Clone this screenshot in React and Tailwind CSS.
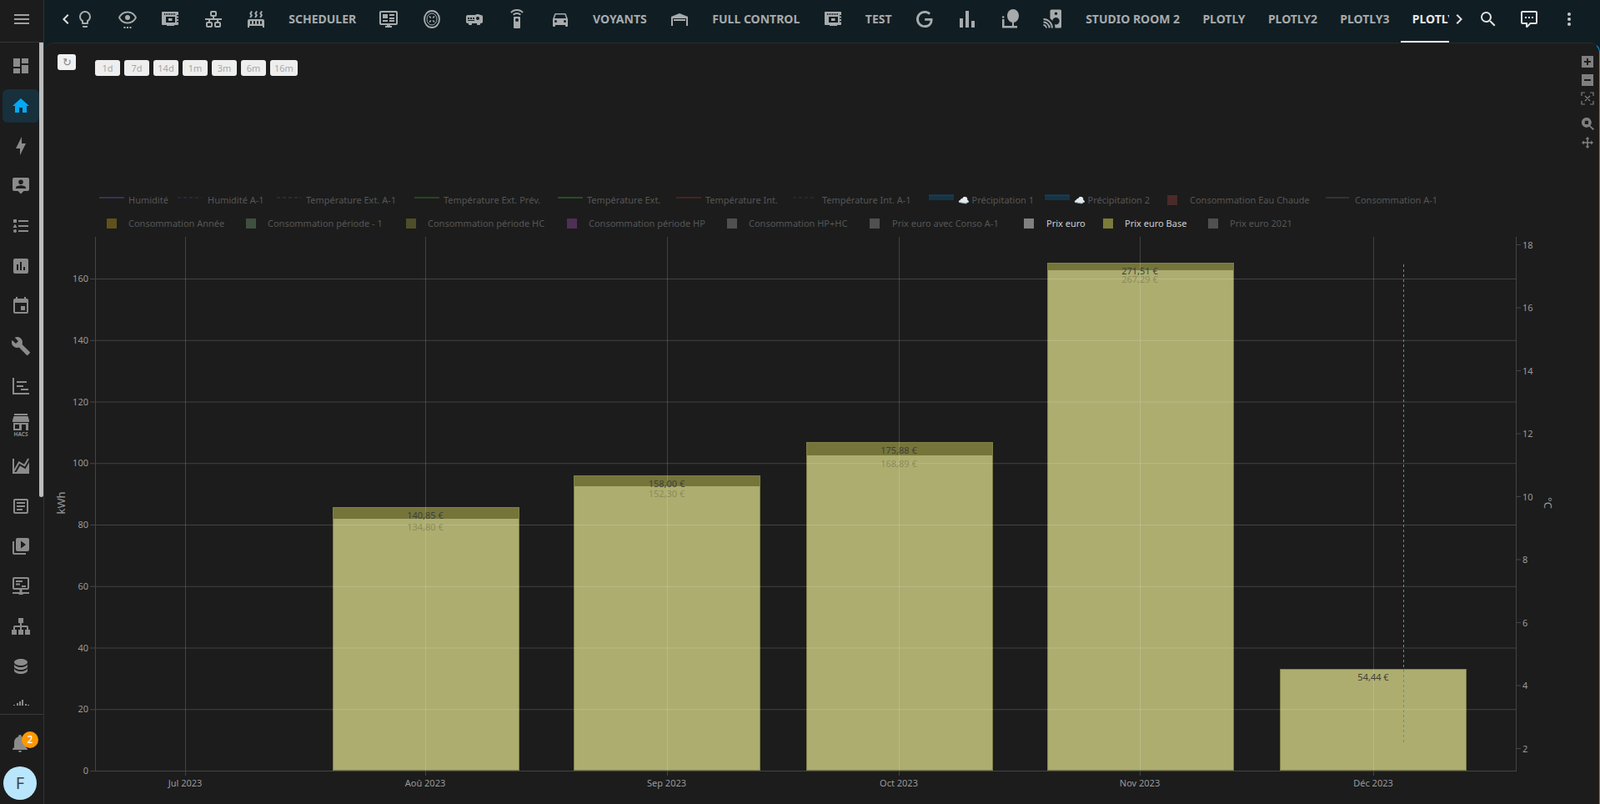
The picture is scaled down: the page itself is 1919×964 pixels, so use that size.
import React from 'react';

const P = {
  menu: 'M3,6H21V8H3V6M3,11H21V13H3V11M3,16H21V18H3V16Z',
  left: 'M15.41,16.58L10.83,12L15.41,7.41L14,6L8,12L14,18L15.41,16.58Z',
  right: 'M8.59,16.58L13.17,12L8.59,7.41L10,6L16,12L10,18L8.59,16.58Z',
  bulb: 'M12,2A7,7 0 0,1 19,9C19,11.38 17.81,13.47 16,14.74V17A1,1 0 0,1 15,18H9A1,1 0 0,1 8,17V14.74C6.19,13.47 5,11.38 5,9A7,7 0 0,1 12,2M9,21V20H15V21A1,1 0 0,1 14,22H10A1,1 0 0,1 9,21M12,4A5,5 0 0,0 7,9C7,11.05 8.23,12.81 10,13.58V16H14V13.58C15.77,12.81 17,11.05 17,9A5,5 0 0,0 12,4Z',
  lan: 'M10,2C8.89,2 8,2.89 8,4V7C8,8.11 8.89,9 10,9H11V11H2V13H6V15H5C3.89,15 3,15.89 3,17V20C3,21.11 3.89,22 5,22H9C10.11,22 11,21.11 11,20V17C11,15.89 10.11,15 9,15H8V13H16V15H15C13.89,15 13,15.89 13,17V20C13,21.11 13.89,22 15,22H19C20.11,22 21,21.11 21,20V17C21,15.89 20.11,15 19,15H18V13H22V11H13V9H14C15.11,9 16,8.11 16,7V4C16,2.89 15.11,2 14,2H10M10,4H14V7H10V4M5,17H9V20H5V17M15,17H19V20H15V17Z',
  radiator: 'M7.95,3L6.53,5.19L7.95,7.4H7.94L5.95,10.5L4.22,9.6L5.64,7.39L4.22,5.19L6.22,2.09L7.95,3M13.95,2.89L12.53,5.1L13.95,7.3L13.94,7.31L11.95,10.4L10.22,9.5L11.64,7.3L10.22,5.1L12.22,2L13.95,2.89M20,2.89L18.56,5.1L20,7.3V7.31L18,10.4L16.25,9.5L17.67,7.3L16.25,5.1L18.25,2L20,2.89M2,22V14A2,2 0 0,1 4,12H20A2,2 0 0,1 22,14V22H20V20H4V22H2M6,14A1,1 0 0,0 5,15V17A1,1 0 0,0 6,18A1,1 0 0,0 7,17V15A1,1 0 0,0 6,14M10,14A1,1 0 0,0 9,15V17A1,1 0 0,0 10,18A1,1 0 0,0 11,17V15A1,1 0 0,0 10,14M14,14A1,1 0 0,0 13,15V17A1,1 0 0,0 14,18A1,1 0 0,0 15,17V15A1,1 0 0,0 14,14M18,14A1,1 0 0,0 17,15V17A1,1 0 0,0 18,18A1,1 0 0,0 19,17V15A1,1 0 0,0 18,14Z',
  monitor: 'M3,2H21A2,2 0 0,1 23,4V17A2,2 0 0,1 21,19H14V20H16V22H8V20H10V19H3A2,2 0 0,1 1,17V4A2,2 0 0,1 3,2M3,4V17H21V4H3M5,6H11V11H5V6M13,6H19V8H13V6M13,10H19V12H13V10M5,13H11V15H5V13M13,13H19V15H13V13Z',
  projector: 'M16,6C14.87,6 13.77,6.35 12.84,7H4C2.89,7 2,7.89 2,9V15C2,16.11 2.89,17 4,17H5V18C5,18.55 5.45,19 6,19H8C8.55,19 9,18.55 9,18V17H15V18C15,18.55 15.45,19 16,19H18C18.55,19 19,18.55 19,18V17H20C21.11,17 22,16.11 22,15V9C22,7.89 21.11,7 20,7H19.15C18.23,6.35 17.13,6 16,6M16,9A2,2 0 0,1 18,11A2,2 0 0,1 16,13A2,2 0 0,1 14,11A2,2 0 0,1 16,9M4,10H6V12H4V10M7,10H9V12H7V10M10,10H12V12H10V10M4,13H12V14H4V13Z',
  remote: 'M12,0C8.96,0 6.21,1.23 4.22,3.22L5.63,4.63C7.26,3 9.5,2 12,2C14.5,2 16.74,3 18.36,4.64L19.77,3.23C17.79,1.23 15.04,0 12,0M7.05,6.05L8.46,7.46C9.37,6.56 10.62,6 12,6C13.38,6 14.63,6.56 15.54,7.46L16.95,6.05C15.68,4.78 13.93,4 12,4C10.07,4 8.32,4.78 7.05,6.05M12,15A2,2 0 0,1 10,13A2,2 0 0,1 12,11A2,2 0 0,1 14,13A2,2 0 0,1 12,15M15,9H9A1,1 0 0,0 8,10V22A1,1 0 0,0 9,23H15A1,1 0 0,0 16,22V10A1,1 0 0,0 15,9Z',
  car: 'M5,11L6.5,6.5H17.5L19,11M17.5,16A1.5,1.5 0 0,1 16,14.5A1.5,1.5 0 0,1 17.5,13A1.5,1.5 0 0,1 19,14.5A1.5,1.5 0 0,1 17.5,16M6.5,16A1.5,1.5 0 0,1 5,14.5A1.5,1.5 0 0,1 6.5,13A1.5,1.5 0 0,1 8,14.5A1.5,1.5 0 0,1 6.5,16M18.92,6C18.72,5.42 18.16,5 17.5,5H6.5C5.84,5 5.28,5.42 5.08,6L3,12V20A1,1 0 0,0 4,21H5A1,1 0 0,0 6,20V19H18V20A1,1 0 0,0 19,21H20A1,1 0 0,0 21,20V12L18.92,6Z',
  garage: 'M22,9V20H20V11H4V20H2V9L12,5L22,9M19,12V14H5V12H19Z',
  google: 'M21.35,11.1H12.18V13.83H18.69C18.36,17.64 15.19,19.27 12.19,19.27C8.36,19.27 5,16.25 5,12C5,7.9 8.2,4.73 12.2,4.73C15.29,4.73 17.1,6.7 17.1,6.7L19,4.72C19,4.72 16.56,2 12.1,2C6.42,2 2,6.8 2,12C2,17.05 6.16,22 12.25,22C17.6,22 21.5,18.33 21.5,12.91C21.5,11.76 21.35,11.1 21.35,11.1V11.1Z',
  poll: 'M3,22V11H7V22H3M10,22V2H14V22H10M17,22V14H21V22H17Z',
  search: 'M9.5,3A6.5,6.5 0 0,1 16,9.5C16,11.11 15.41,12.59 14.44,13.73L14.71,14H15.5L20.5,19L19,20.5L14,15.5V14.71L13.73,14.44C12.59,15.41 11.11,16 9.5,16A6.5,6.5 0 0,1 3,9.5A6.5,6.5 0 0,1 9.5,3M9.5,5C7,5 5,7 5,9.5C5,12 7,14 9.5,14C12,14 14,12 14,9.5C14,7 12,5 9.5,5Z',
  comment: 'M9,22A1,1 0 0,1 8,21V18H4A2,2 0 0,1 2,16V4C2,2.89 2.9,2 4,2H20A2,2 0 0,1 22,4V16A2,2 0 0,1 20,18H13.9L10.2,21.71C10,21.9 9.75,22 9.5,22V22H9M10,16V19.08L13.08,16H20V4H4V16H10M17,11H15V9H17V11M13,11H11V9H13V11M9,11H7V9H9V11Z',
  dots: 'M12,16A2,2 0 0,1 14,18A2,2 0 0,1 12,20A2,2 0 0,1 10,18A2,2 0 0,1 12,16M12,10A2,2 0 0,1 14,12A2,2 0 0,1 12,14A2,2 0 0,1 10,12A2,2 0 0,1 12,10M12,4A2,2 0 0,1 14,6A2,2 0 0,1 12,8A2,2 0 0,1 10,6A2,2 0 0,1 12,4Z',
  dashboard: 'M13,3V9H21V3M13,21H21V11H13M3,21H11V15H3M3,13H11V3H3V13Z',
  home: 'M10,20V14H14V20H19V12H22L12,3L2,12H5V20H10Z',
  bolt: 'M11,15H6L13,1V9H18L11,23V15Z',
  accountBox: 'M4,2H20A2,2 0 0,1 22,4V16A2,2 0 0,1 20,18H15.5L12,21.5L8.5,18H4A2,2 0 0,1 2,16V4A2,2 0 0,1 4,2M12,4.5A2.8,2.8 0 0,0 9.2,7.3A2.8,2.8 0 0,0 12,10.1A2.8,2.8 0 0,0 14.8,7.3A2.8,2.8 0 0,0 12,4.5M6,15H18V14C18,12.2 14,11.2 12,11.2C10,11.2 6,12.2 6,14V15Z',
  listType: 'M5,9.5L7.5,14H2.5L5,9.5M3,4H7V8H3V4M5,20A2,2 0 0,0 7,18A2,2 0 0,0 5,16A2,2 0 0,0 3,18A2,2 0 0,0 5,20M9,5V7H21V5H9M9,19H21V17H9V19M9,13H21V11H9V13Z',
  chartBox: 'M19,3H5C3.9,3 3,3.9 3,5V19C3,20.1 3.9,21 5,21H19C20.1,21 21,20.1 21,19V5C21,3.9 20.1,3 19,3M9,17H7V10H9V17M13,17H11V7H13V17M17,17H15V13H17V17Z',
  calendar: 'M19,19H5V8H19M16,1V3H8V1H6V3H5C3.89,3 3,3.89 3,5V19A2,2 0 0,0 5,21H19A2,2 0 0,0 21,19V5C21,3.89 20.1,3 19,3H18V1M17,12H12V17H17V12Z',
  wrench: 'M22.7,19L13.6,9.9C14.5,7.6 14,4.9 12.1,3C10.1,1 7.1,0.6 4.7,1.7L9,6L6,9L1.6,4.7C0.4,7.1 0.9,10.1 2.9,12.1C4.8,14 7.5,14.5 9.8,13.6L18.9,22.7C19.3,23.1 19.9,23.1 20.3,22.7L22.6,20.4C23.1,20 23.1,19.3 22.7,19Z',
  timeline: 'M2,2H4V20H22V22H2V2M7,6H19V8H7V6M7,11H15V13H7V11M12,15H21V17H12V15Z',
  area: 'M17.45,15.18L22,7.31V21H2V3H4V15.54L9.5,6L16,9.78L20.24,2.45L21.97,3.45L16.74,12.5L10.23,8.75L4.31,19H6.57L10.96,11.44L17.45,15.18Z',
  textBox: 'M5,3C3.89,3 3,3.89 3,5V19C3,20.11 3.89,21 5,21H19C20.11,21 21,20.11 21,19V5C21,3.89 20.11,3 19,3H5M5,5H19V19H5V5M7,7V9H17V7H7M7,11V13H17V11H7M7,15V17H14V15H7Z',
  playBox: 'M4,6H2V20A2,2 0 0,0 4,22H18V20H4V6M20,2A2,2 0 0,1 22,4V16A2,2 0 0,1 20,18H8A2,2 0 0,1 6,16V4A2,2 0 0,1 8,2H20M12,14.5L18,10L12,5.5V14.5Z',
  server: 'M4,1H20A2,2 0 0,1 22,3V14A2,2 0 0,1 20,16H13.5V19H22V21H14.5V22H9.5V21H2V19H10.5V16H4A2,2 0 0,1 2,14V3A2,2 0 0,1 4,1M4,3V14H20V3H4M6,5H14V7H6V5M6,8.5H11V10.5H6V8.5M13,11H18V13H13V11Z',
  sitemap: 'M9,2V8H11V11H5C3.89,11 3,11.89 3,13V16H1V22H7V16H5V13H11V16H9V22H15V16H13V13H19V16H17V22H23V16H21V13C21,11.89 20.11,11 19,11H13V8H15V2H9Z',
  database: 'M12,3C7.58,3 4,4.79 4,7C4,9.21 7.58,11 12,11C16.42,11 20,9.21 20,7C20,4.79 16.42,3 12,3M4,9V12C4,14.21 7.58,16 12,16C16.42,16 20,14.21 20,12V9C20,11.21 16.42,13 12,13C7.58,13 4,11.21 4,9M4,14V17C4,19.21 7.58,21 12,21C16.42,21 20,19.21 20,17V14C20,16.21 16.42,18 12,18C7.58,18 4,16.21 4,14Z',
  lowBars: 'M3,10H5V24H3ZM7,8H9V24H7ZM10,6H12V24H10ZM13,4H15V24H13ZM17,9H19V24H17ZM20,10H22V24H20Z',
  bell: 'M21,19V20H3V19L5,17V11C5,7.9 7.03,5.17 10,4.29C10,4.19 10,4.1 10,4A2,2 0 0,1 12,2A2,2 0 0,1 14,4C14,4.1 14,4.19 14,4.29C16.97,5.17 19,7.9 19,11V17L21,19M14,21A2,2 0 0,1 12,23A2,2 0 0,1 10,21',
};

function Mdi({ d, className = '' }) {
  return (
    <svg viewBox="0 0 24 24" className={`w-6 h-6 shrink-0 fill-current ${className}`}>
      <path d={d} fillRule="evenodd" />
    </svg>
  );
}

function EyeDots() {
  return (
    <svg viewBox="0 0 24 24" className="w-6 h-6 shrink-0 fill-current">
      <path transform="translate(0,-2)" fillRule="evenodd" d="M12,9A3,3 0 0,1 15,12A3,3 0 0,1 12,15A3,3 0 0,1 9,12A3,3 0 0,1 12,9M12,4.5C17,4.5 21.27,7.61 23,12C21.27,16.39 17,19.5 12,19.5C7,19.5 2.73,16.39 1,12C2.73,7.61 7,4.5 12,4.5M3.18,12C4.83,15.36 8.24,17.5 12,17.5C15.76,17.5 19.17,15.36 20.82,12C19.17,8.64 15.76,6.5 12,6.5C8.24,6.5 4.83,8.64 3.18,12Z" />
      <rect x="7.5" y="21" width="2" height="2" />
      <rect x="11" y="21" width="2" height="2" />
      <rect x="14.5" y="21" width="2" height="2" />
    </svg>
  );
}

// board with a comb along the top edge and connector teeth on the right
function CardIcon() {
  return (
    <svg viewBox="0 0 24 24" className="w-6 h-6 shrink-0 fill-current">
      <path fillRule="evenodd" d="M3,3H21A1,1 0 0,1 22,4V7H20V8.5H22V10.5H20V12H22V14H20V15.5H22V18A1,1 0 0,1 21,19H17V20H8V19H3A1,1 0 0,1 2,18V4A1,1 0 0,1 3,3M5,5V7H6V5H5M7,5V7H8V5H7M9,5V7H10V5H9M11,5V7H12V5H11M13,5V7H14V5H13M15,5V7H16V5H15M17,5V7H18V5H17M7,9V16H18V9H7Z" />
      <rect x="10" y="11" width="4.5" height="3" />
    </svg>
  );
}

function VacuumIcon() {
  return (
    <svg viewBox="0 0 24 24" className="w-6 h-6 shrink-0 stroke-current fill-none">
      <ellipse cx="12" cy="12" rx="9" ry="10" strokeWidth="1.8" />
      <ellipse cx="12" cy="12" rx="6" ry="7" strokeWidth="1" />
      <path d="M9,8.5L10.8,10.5M15,8.5L13.2,10.5M9,15.5L10.8,13.5M15,15.5L13.2,13.5" strokeWidth="1.6" />
    </svg>
  );
}

function TreeIcon() {
  return (
    <svg viewBox="0 0 24 24" className="w-6 h-6 shrink-0 fill-current">
      <ellipse cx="15" cy="8" rx="7" ry="8" />
      <rect x="14" y="15" width="2" height="6" />
      <rect x="2" y="20" width="18" height="2.5" />
      <rect x="2" y="12" width="2.5" height="9" />
      <circle cx="3.2" cy="9.5" r="1.3" />
    </svg>
  );
}

function CastSpeakerIcon() {
  return (
    <svg viewBox="0 0 24 24" className="w-6 h-6 shrink-0">
      <path className="fill-current" fillRule="evenodd" d="M10,0.5H20.5A1.5,1.5 0 0,1 22,2V21A1.5,1.5 0 0,1 20.5,22.5H10A1.5,1.5 0 0,1 8.5,21V2A1.5,1.5 0 0,1 10,0.5M15.5,3.5A1.8,1.8 0 0,0 15.5,7.1A1.8,1.8 0 0,0 15.5,3.5M15.5,10A4.2,4.2 0 0,0 15.5,18.4A4.2,4.2 0 0,0 15.5,10Z" />
      <path d="M0.5,11.5A11,11 0 0,1 12,23" className="stroke-[#101e24] fill-none" strokeWidth="5" />
      <g className="stroke-current fill-none" strokeWidth="1.8">
        <path d="M0.5,19A3.5,3.5 0 0,1 4,22.5" />
        <path d="M0.5,15.5A7,7 0 0,1 7.5,22.5" />
        <path d="M0.5,12A10.5,10.5 0 0,1 11,22.5" />
      </g>
    </svg>
  );
}

function HacsIcon() {
  return (
    <svg viewBox="0 0 24 24" className="w-6 h-6 shrink-0 fill-current overflow-visible">
      <path fillRule="evenodd" d="M4,-3H20V-1H4ZM3.5,0H20.5L22,5V7H2V5ZM3,8H21V17H3ZM5,10V15H10V10ZM13,10V17H18V10Z" />
      <text x="12" y="24" textAnchor="middle" fontSize="6.5" fontWeight="700" className="font-['Liberation_Sans',sans-serif]">HACS</text>
    </svg>
  );
}

const tabs = [
  { icon: <Mdi d={P.bulb} /> },
  { icon: <EyeDots /> },
  { icon: <CardIcon /> },
  { icon: <Mdi d={P.lan} /> },
  { icon: <Mdi d={P.radiator} /> },
  { label: 'SCHEDULER' },
  { icon: <Mdi d={P.monitor} /> },
  { icon: <VacuumIcon /> },
  { icon: <Mdi d={P.projector} /> },
  { icon: <Mdi d={P.remote} /> },
  { icon: <Mdi d={P.car} /> },
  { label: 'VOYANTS' },
  { icon: <Mdi d={P.garage} /> },
  { label: 'FULL CONTROL' },
  { icon: <CardIcon /> },
  { label: 'TEST' },
  { icon: <Mdi d={P.google} /> },
  { icon: <Mdi d={P.poll} /> },
  { icon: <TreeIcon /> },
  { icon: <CastSpeakerIcon /> },
  { label: 'STUDIO ROOM 2' },
  { label: 'PLOTLY' },
  { label: 'PLOTLY2' },
  { label: 'PLOTLY3' },
  { label: 'PLOTLY5', active: true },
];

const sideItems = [
  P.dashboard, P.home, P.bolt, P.accountBox, P.listType, P.chartBox, P.calendar, P.wrench, P.timeline,
  'hacs', P.area, P.textBox, P.playBox, P.server, P.sitemap, P.database, P.lowBars,
];

const ranges = ['1d', '7d', '14d', '1m', '3m', '6m', '16m'];

// legend, same coordinates as the plot
const lineLegend = [
  { x: 119, w: 30, tx: 154, c: '#4f4f8f', t: 'Humidité' },
  { x: 213, w: 29, tx: 249, c: '#35355c', dash: '4 3', t: 'Humidité A-1' },
  { x: 332, w: 29, tx: 367, c: '#2d482d', dash: '4 3', t: 'Température Ext. A-1' },
  { x: 497, w: 30, tx: 532, c: '#2c722c', t: 'Température Ext. Prév.' },
  { x: 669, w: 30, tx: 704, c: '#2c832c', t: 'Température Ext.' },
  { x: 811, w: 30, tx: 846, c: '#752a2a', t: 'Température Int.' },
  { x: 951, w: 28, tx: 986, c: '#4a2a2a', dash: '4 3', t: 'Température Int. A-1' },
  { x: 1590, w: 28, tx: 1625, c: '#4a4a4a', t: 'Consommation A-1' },
];
const rainLegend = [
  { x: 1114, tx: 1149, t: '☁ Précipitation 1' },
  { x: 1253, tx: 1288, t: '☁ Précipitation 2' },
];
const boxLegend = [
  { x: 1400, y: 234, tx: 1427, c: '#4a2a2a', t: 'Consommation Eau Chaude' },
  { x: 128, y: 262, tx: 154, c: '#5f5219', t: 'Consommation Année' },
  { x: 295, y: 262, tx: 321, c: '#3f5040', t: 'Consommation période - 1' },
  { x: 487, y: 262, tx: 513, c: '#4e4e2a', t: 'Consommation période HC' },
  { x: 680, y: 262, tx: 706, c: '#4f2f57', t: 'Consommation période HP' },
  { x: 872, y: 262, tx: 898, c: '#505050', t: 'Consommation HP+HC' },
  { x: 1043, y: 262, tx: 1070, c: '#505050', t: 'Prix euro avec Conso A-1' },
  { x: 1228, y: 262, tx: 1255, c: '#808080', t: 'Prix euro', on: true },
  { x: 1323, y: 262, tx: 1349, c: '#7b7b3a', t: 'Prix euro Base', on: true },
  { x: 1449, y: 262, tx: 1475, c: '#505050', t: 'Prix euro 2021' },
];

const bars = [
  { x: 399, w: 224, top: 608, mid: 622, cx: 510, a: '140,85 €', ay: 622, b: '134,80 €', by: 636 },
  { x: 688, w: 224, top: 570, mid: 583, cx: 799.5, a: '158,00 €', ay: 584, b: '152,30 €', by: 596 },
  { x: 967, w: 224, top: 530, mid: 546, cx: 1078, a: '175,88 €', ay: 544, b: '168,89 €', by: 560 },
  { x: 1256, w: 224, top: 315, mid: 324, cx: 1367, a: '271,51 €', ay: 329, b: '267,29 €', by: 339 },
  { x: 1535, w: 224, top: 802, mid: 802, cx: 1647, a: '54,44 €', ay: 816 },
];

const xLabels = [
  { x: 222, t: 'Jul 2023' },
  { x: 510, t: 'Aoû 2023' },
  { x: 799.5, t: 'Sep 2023' },
  { x: 1078, t: 'Oct 2023' },
  { x: 1367, t: 'Nov 2023' },
  { x: 1647, t: 'Déc 2023' },
];

const leftTicks = [0, 20, 40, 60, 80, 100, 120, 140, 160];
const rightTicks = [2, 4, 6, 8, 10, 12, 14, 16, 18];
const yLeft = (v) => 924 - v * 3.6875;
const yRight = (v) => 897.5 - (v - 2) * 37.75;

function Chart() {
  const grid = 'rgba(255,255,255,0.17)';
  return (
    <svg viewBox="53 230 1865 734" width="1865" height="734" className="block font-['DejaVu_Sans',sans-serif]" fontSize="11">
      {lineLegend.map((l) => (
        <g key={l.t}>
          <line x1={l.x} x2={l.x + l.w} y1="237" y2="237" stroke={l.c} strokeDasharray={l.dash} />
          <text x={l.tx} y="244" fill="#565656">{l.t}</text>
        </g>
      ))}
      {rainLegend.map((l) => (
        <g key={l.t}>
          <rect x={l.x} y="234" width="30" height="6" fill="#163447" />
          <line x1={l.x} x2={l.x + 30} y1="234" y2="234" stroke="#1c4a66" />
          <text x={l.tx} y="244" fill="#565656">{l.t}</text>
        </g>
      ))}
      {boxLegend.map((l) => (
        <g key={l.t}>
          <rect x={l.x} y={l.y} width="12" height="12" fill={l.c} />
          <text x={l.tx} y={l.y + 10} fill={l.on ? '#cfcfcf' : '#565656'}>{l.t}</text>
        </g>
      ))}

      {bars.map((b) => (
        <g key={b.x}>
          <rect x={b.x} y={b.top} width={b.w} height={924 - b.top} fill="#adad70" />
          <rect x={b.x} y={b.top} width={b.w} height={b.mid - b.top} fill="#75753a" />
          <rect x={b.x + 0.5} y={b.top + 0.5} width={b.w - 1} height={923 - b.top} fill="none" stroke="#7f7f4a" />
        </g>
      ))}

      {leftTicks.slice(1).map((v) => (
        <line key={v} x1="114" x2="1818" y1={yLeft(v) + 0.5} y2={yLeft(v) + 0.5} stroke={grid} />
      ))}
      {xLabels.map((l) => (
        <line key={l.t} x1={Math.round(l.x) + 0.5} x2={Math.round(l.x) + 0.5} y1="284" y2="924" stroke={grid} />
      ))}
      <line x1="114.5" x2="114.5" y1="284" y2="925" stroke="#444" />
      <line x1="1818.5" x2="1818.5" y1="284" y2="925" stroke="#444" />
      <line x1="114" x2="1818" y1="924.5" y2="924.5" stroke="#444" />

      <line x1="1683.5" x2="1683.5" y1="317" y2="892" stroke="#22a7cc" strokeDasharray="3 3" />

      {bars.map((b) => (
        <g key={b.a} textAnchor="middle">
          <text x={b.cx} y={b.ay} fill="#40403a">{b.a}</text>
          {b.b && <text x={b.cx} y={b.by} fill="#8c8c58">{b.b}</text>}
        </g>
      ))}

      {leftTicks.map((v) => (
        <g key={v}>
          <line x1="108" x2="114" y1={yLeft(v) + 0.5} y2={yLeft(v) + 0.5} stroke="#444" />
          <text x="106" y={yLeft(v) + 4} textAnchor="end" fill="#9a9a9a">{v}</text>
        </g>
      ))}
      {rightTicks.map((v) => (
        <g key={v}>
          <line x1="1818" x2="1824" y1={yRight(v)} y2={yRight(v)} stroke="#444" />
          <text x="1826" y={yRight(v) + 4} fill="#9a9a9a">{v}</text>
        </g>
      ))}
      {xLabels.map((l) => (
        <g key={l.t}>
          <line x1={Math.round(l.x) + 0.5} x2={Math.round(l.x) + 0.5} y1="924" y2="930" stroke="#444" />
          <text x={l.x} y="943" textAnchor="middle" fill="#9a9a9a">{l.t}</text>
        </g>
      ))}

      <text transform="translate(78,603) rotate(-90)" textAnchor="middle" fontSize="13" fill="#9a9a9a">kWh</text>
      <text transform="translate(1852,603) rotate(90)" textAnchor="middle" fontSize="13" fill="#9a9a9a">°C</text>
    </svg>
  );
}

function ModeBar() {
  return (
    <div className="absolute right-[6px] top-[15px] flex flex-col items-center text-[#7f7f7f]">
      <svg viewBox="0 0 14 14" className="w-[14px] h-[14px] fill-current">
        <path fillRule="evenodd" d="M0,0H14V14H0ZM6,3V6H3V8H6V11H8V8H11V6H8V3Z" />
      </svg>
      <svg viewBox="0 0 14 14" className="w-[14px] h-[14px] mt-2 fill-current">
        <path fillRule="evenodd" d="M0,0H14V14H0ZM3,6V8H11V6Z" />
      </svg>
      <svg viewBox="0 0 16 16" className="w-4 h-4 mt-[7px] fill-none stroke-current">
        <path d="M1,5V1H5M11,1H15V5M15,11V15H11M5,15H1V11M5,5L11,11M11,5L5,11" strokeWidth="1.2" />
      </svg>
      <svg viewBox="0 0 14 14" className="w-[15px] h-[15px] mt-[15px] fill-current">
        <path fillRule="evenodd" d="M5.5,0A5.5,5.5 0 0,1 9.7,9L14,12.6L12.6,14L8.6,10A5.5,5.5 0 1,1 5.5,0M3.5,3.5V7.5H7.5V3.5Z" />
      </svg>
      <svg viewBox="0 0 14 14" className="w-[14px] h-[14px] mt-2 fill-current">
        <path d="M7,0L9.5,2.8H7.8V6.2H11.2V4.5L14,7L11.2,9.5V7.8H7.8V11.2H9.5L7,14L4.5,11.2H6.2V7.8H2.8V9.5L0,7L2.8,4.5V6.2H6.2V2.8H4.5Z" />
      </svg>
    </div>
  );
}

export default function App() {
  return (
    <div className="w-full h-[964px] flex overflow-hidden bg-[#1c1c1c] font-['Roboto',sans-serif]">
      <aside className="w-[53px] shrink-0 h-full flex flex-col border-r border-[#323232] text-[#8b8b8b]">
        <div className="h-[51px] shrink-0 flex items-center justify-center pb-[5px] border-b border-[#333333] text-[#a0a0a0]">
          <Mdi d={P.menu} />
        </div>
        <div className="relative h-[795px] shrink-0 overflow-hidden pt-1">
          {sideItems.map((d, i) => (
            <div key={i} className="h-12 flex items-center">
              {d === P.home ? (
                <div className="ml-[3px] w-[44px] h-10 rounded-md bg-[#17303c] flex items-center justify-center text-[#03a9f4]">
                  <Mdi d={d} />
                </div>
              ) : (
                <div className="ml-[3px] w-[44px] flex justify-center">
                  {d === 'hacs' ? <HacsIcon /> : <Mdi d={d} />}
                </div>
              )}
            </div>
          ))}
          <div className="absolute right-0 top-0 w-[5px] h-[545px] rounded-b-sm bg-[#bdbdbd]" />
        </div>
        <div className="mt-[10px] flex-1 border-t border-[#3a3a3a] flex flex-col items-center pt-[22px] pr-[4px]">
          <div className="relative">
            <Mdi d={P.bell} />
            <div className="absolute left-[14px] top-[-2px] w-5 h-5 rounded-full bg-[#ff9800] text-white text-xs font-medium flex items-center justify-center">2</div>
          </div>
          <div className="mt-4 w-10 h-10 rounded-full bg-[#b9e6fc] text-[#444444] text-xl flex items-center justify-center">F</div>
        </div>
      </aside>

      <div className="flex-1 min-w-0 h-full flex flex-col bg-[#101e24]">
        <header className="h-[51px] shrink-0 flex text-[#a8abac]">
          <div className="w-[23px] shrink-0 flex items-center justify-end pb-[5px]">
            <Mdi d={P.left} className="mr-[-15px] text-[#e0e0e0]" />
          </div>
          <div className="flex-1 min-w-0 flex overflow-hidden">
            {tabs.map((t, i) => (
              <div
                key={i}
                className={`relative shrink-0 h-full flex items-center px-[13.67px] pb-[5px] text-sm font-bold ${t.active ? 'text-[#e8e8e8]' : ''}`}
              >
                {t.icon || t.label}
                {t.active && <div className="absolute left-0 right-0 bottom-0 h-[2px] bg-[#ededed]" />}
              </div>
            ))}
          </div>
          <div className="shrink-0 flex items-center pb-[5px] text-[#e0e0e0]">
            <Mdi d={P.right} />
            <div className="w-12 flex justify-center ml-[-1px]"><Mdi d={P.search} /></div>
            <div className="w-12 flex justify-center ml-[1px]"><Mdi d={P.comment} /></div>
            <div className="w-12 flex justify-center text-[#c8c8c8]"><Mdi d={P.dots} /></div>
            <div className="w-[13px]" />
          </div>
        </header>

        <main className="relative flex-1 min-h-0 rounded-t-xl bg-[#1c1c1c] border-r border-t border-r-[#039be5] border-t-[#2a2a2a]">
          <div className="h-[178px] flex items-start pl-4 pt-[13px] font-['DejaVu_Sans',sans-serif] text-[11px] text-[#a8a8a8]">
            <button className="w-[22px] h-[19px] rounded-[3px] bg-[#f0f0f0] text-[#888888] text-[13px] leading-none">↻</button>
            <div className="ml-[23px] mt-[7px] flex gap-[5px]">
              {ranges.map((r) => (
                <button key={r} className="min-w-[30px] h-[19px] px-[5px] rounded-[3px] bg-[#eeeeee] leading-none">{r}</button>
              ))}
            </div>
          </div>
          <Chart />
          <ModeBar />
        </main>
      </div>
    </div>
  );
}
